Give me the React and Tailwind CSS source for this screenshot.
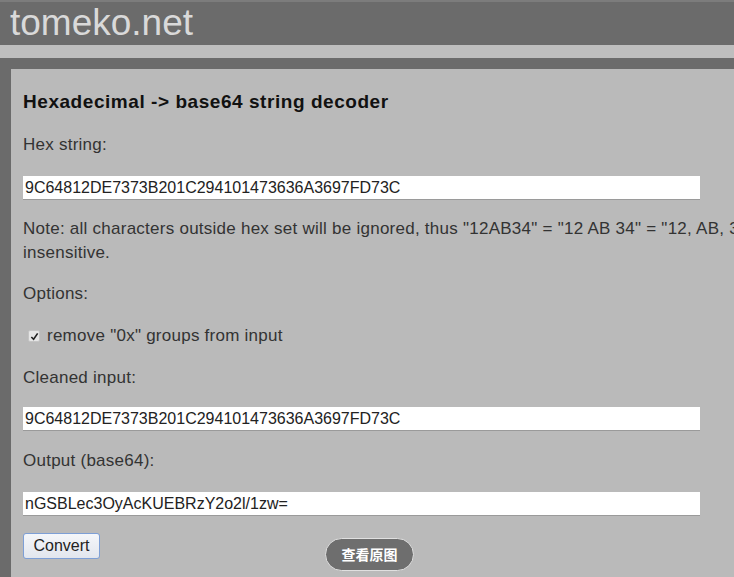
import React from "react";

function Field({ value }) {
  return (
    <div className="w-[677px] h-[23px] bg-white flex items-center pl-[2px] text-[16px] tracking-normal text-[#222] whitespace-nowrap shadow-[0_1px_0_#9a9a9a]">
      {value}
    </div>
  );
}

export default function App() {
  const hex = "9C64812DE7373B201C294101473636A3697FD73C";
  return (
    <div
      className="relative w-[734px] h-[577px] overflow-hidden bg-[#6b6b6b]"
      style={{ fontFamily: '"Liberation Sans", Arial, sans-serif' }}
    >
      <div className="h-[2px] bg-[#7c7c7c]" />
      <div className="h-[43px] flex items-center pl-[10px]">
        <span className="text-[37px] leading-none text-[#d9d9d9] -mt-[2px]">
          tomeko.net
        </span>
      </div>
      <div className="h-[13px] bg-[#bebebe]" />
      <div className="h-[11px] bg-[#6b6b6b]" />
      <div className="ml-[11px] w-[800px] h-[520px] bg-[#bababa] pl-[12px] pt-[22px] text-[#333] text-[17px] tracking-[0.25px]">
        <h2 className="text-[19px] tracking-[0.55px] leading-[21px] font-bold text-[#111]">
          Hexadecimal -&gt; base64 string decoder
        </h2>
        <div className="mt-[24px] leading-[18px]">Hex string:</div>
        <div className="mt-[22px]">
          <Field value={hex} />
        </div>
        <div className="mt-[18px] leading-[24px] whitespace-nowrap">
          <div>
            Note: all characters outside hex set will be ignored, thus "12AB34" = "12 AB 34" = "12, AB, 34" are equal. Case
          </div>
          <div>insensitive.</div>
        </div>
        <div className="mt-[20px] leading-[18px]">Options:</div>
        <div className="mt-[24px] flex items-center leading-[18px]">
          <span className="ml-[5px] mr-[7px] w-[12px] h-[12px] rounded-[2px] bg-[#e6e6e6] border border-[#c4c4c4] flex items-center justify-center">
            <svg width="9" height="9" viewBox="0 0 10 10">
              <path d="M1.5 5.5 L4 8 L8.5 1.5" fill="none" stroke="#222" strokeWidth="1.8" />
            </svg>
          </span>
          remove "0x" groups from input
        </div>
        <div className="mt-[24px] leading-[18px]">Cleaned input:</div>
        <div className="mt-[20px]">
          <Field value={hex} />
        </div>
        <div className="mt-[22px] leading-[18px]">Output (base64):</div>
        <div className="mt-[22px]">
          <Field value="nGSBLec3OyAcKUEBRzY2o2l/1zw=" />
        </div>
        <button className="mt-[18px] w-[77px] h-[26px] rounded-[3px] border border-[#7d9fd6] bg-gradient-to-b from-[#f4f6fa] to-[#e2e6ee] text-[16px] tracking-normal text-[#222] flex items-center justify-center">
          Convert
        </button>
      </div>
      <div
        className="absolute left-[325px] top-[538px] w-[89px] h-[33px] rounded-full bg-[#6e6e6e] border border-[#e0e0e0] flex items-center justify-center text-white text-[14px] font-bold"
        style={{ fontFamily: '"Noto Sans CJK SC", sans-serif' }}
      >
        查看原图
      </div>
    </div>
  );
}
